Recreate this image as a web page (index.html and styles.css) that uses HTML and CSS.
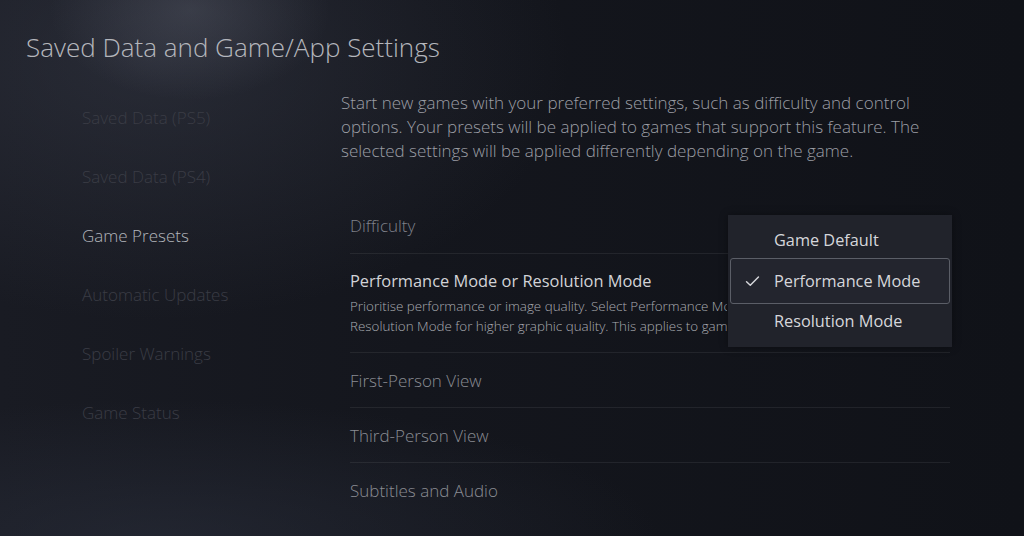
FILE: index.html
```html
<!DOCTYPE html>
<html lang="en">
<head>
<meta charset="utf-8">
<title>Saved Data and Game/App Settings</title>
<link rel="stylesheet" href="styles.css">
</head>
<body>
<div class="screen">
  <h1 class="title">Saved Data and Game/App Settings</h1>
  <div class="main">
    <nav class="nav">
      <div class="nav-item">Saved Data (PS5)</div>
      <div class="nav-item">Saved Data (PS4)</div>
      <div class="nav-item active">Game Presets</div>
      <div class="nav-item">Automatic Updates</div>
      <div class="nav-item">Spoiler Warnings</div>
      <div class="nav-item">Game Status</div>
    </nav>
    <section class="content">
      <p class="intro">Start new games with your preferred settings, such as difficulty and control options. Your presets will be applied to games that support this feature. The selected settings will be applied differently depending on the game.</p>
      <div class="rows">
        <div class="row">Difficulty</div>
        <div class="row row-focus">
          <div class="row-title">Performance Mode or Resolution Mode</div>
          <div class="row-desc">Prioritise performance or image quality. Select Performance Mode for smoother gameplay or<br>Resolution Mode for higher graphic quality. This applies to games that support this feature.</div>
        </div>
        <div class="row">First-Person View</div>
        <div class="row">Third-Person View</div>
        <div class="row">Subtitles and Audio</div>
      </div>
      <div class="dropdown">
        <div class="opt opt-first">Game Default</div>
        <div class="opt opt-selected">
          <svg class="check" viewBox="0 0 16 12" width="15" height="11"><path d="M1.5 6.2 L5.6 10 L14.5 1.2" fill="none" stroke="#d6d7db" stroke-width="1.6" stroke-linecap="round" stroke-linejoin="round"/></svg>
          Performance Mode
        </div>
        <div class="opt opt-last">Resolution Mode</div>
      </div>
    </section>
  </div>
</div>
</body>
</html>
```

FILE: styles.css
```css
* { box-sizing: border-box; }
html, body { margin: 0; padding: 0; }
body {
  width: 1024px;
  height: 536px;
  overflow: hidden;
  font-family: "Open Sans", "Noto Sans", sans-serif;
  background-color: #13151c;
  background-image:
    radial-gradient(ellipse 140px 90px at 190px 10px, rgba(120,124,140,0.26), rgba(120,124,140,0) 100%),
    radial-gradient(ellipse 420px 260px at 150px 60px, rgba(60,64,78,0.45), rgba(60,64,78,0) 100%),
    radial-gradient(ellipse 500px 140px at 160px 540px, rgba(45,50,64,0.5), rgba(45,50,64,0) 100%),
    linear-gradient(90deg, #191b23 0%, #14161d 40%, #101218 100%);
}
.screen { position: relative; width: 1024px; height: 536px; }
.title {
  margin: 0;
  padding: 31px 0 0 26px;
  font-weight: 300;
  font-size: 26px;
  line-height: 32px;
  color: #b4b6bc;
  letter-spacing: 0;
}
.main {
  display: grid;
  grid-template-columns: 341px 1fr;
  padding-top: 25px;
}
.nav {
  display: flex;
  flex-direction: column;
  padding-left: 82px;
}
.nav-item {
  height: 59px;
  line-height: 59px;
  font-size: 17px;
  font-weight: 300;
  color: #3a3c45;
}
.nav-item.active { color: #b3b5bb; }
.content { position: relative; }
.intro {
  margin: 0;
  padding-top: 3px;
  width: 600px;
  font-size: 17px;
  line-height: 24px;
  font-weight: 300;
  color: #9c9ea5;
}
.rows {
  margin-top: 35px;
  margin-left: 9px;
  width: 600px;
}
.row {
  height: 55px;
  display: flex;
  align-items: center;
  font-size: 17px;
  font-weight: 300;
  color: #8a8c93;
  border-top: 1px solid rgba(255,255,255,0.07);
}
.row:first-child { border-top: none; color: #7f818a; }
.row-focus {
  height: auto;
  display: block;
  padding: 15px 0 16px;
}
.row-title {
  font-size: 16.4px;
  line-height: 24px;
  font-weight: 400;
  color: #d2d3d7;
}
.row-desc {
  margin-top: 3px;
  font-size: 13.4px;
  line-height: 20px;
  font-weight: 300;
  color: #a8aab0;
  white-space: nowrap;
  overflow: hidden;
  width: 377px;
}
.dropdown {
  position: absolute;
  left: 387px;
  top: 127px;
  width: 224px;
  padding: 0 2px;
  background: #21232b;
  box-shadow: 0 0 8px rgba(0,0,0,0.35);
  z-index: 2;
}
.opt {
  display: flex;
  align-items: center;
  padding-left: 44px;
  font-size: 16.3px;
  font-weight: 400;
  color: #d6d7db;
  position: relative;
}
.opt-first { height: 43px; padding-top: 6px; }
.opt-selected {
  height: 46px;
  border: 1px solid #5b5e67;
  border-radius: 3px;
  padding-left: 43px;
  background: #23252e;
}
.opt-last { height: 43px; padding-bottom: 9px; }
.check { position: absolute; left: 14px; top: 17px; }
```
